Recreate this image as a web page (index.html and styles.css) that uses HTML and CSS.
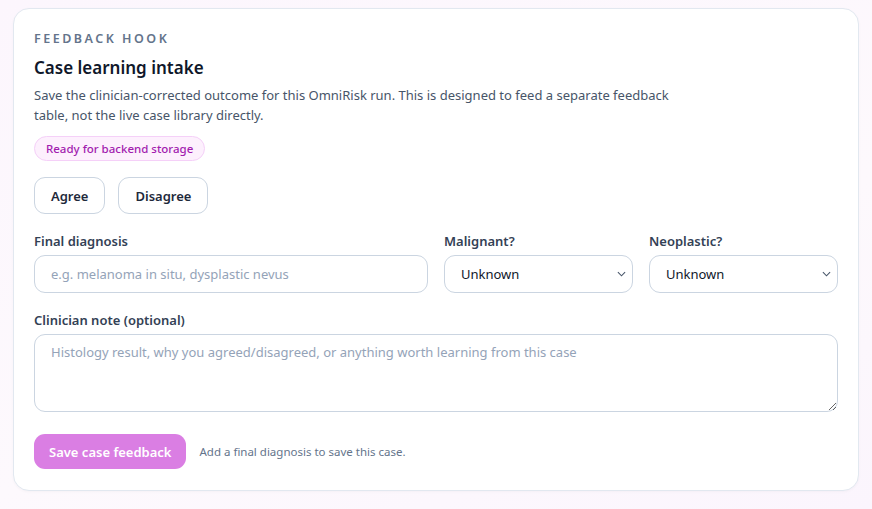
FILE: index.html
```html
<!DOCTYPE html>
<html lang="en">
<head>
<meta charset="utf-8">
<title>Feedback hook</title>
<link rel="stylesheet" href="styles.css">
</head>
<body>
<section class="card">
  <div class="eyebrow">FEEDBACK HOOK</div>
  <h2 class="title">Case learning intake</h2>
  <p class="desc">Save the clinician-corrected outcome for this OmniRisk run. This is designed to feed a separate feedback table, not the live case library directly.</p>
  <span class="badge">Ready for backend storage</span>
  <div class="choice-row">
    <button class="choice" type="button">Agree</button>
    <button class="choice" type="button">Disagree</button>
  </div>
  <div class="field-grid">
    <label class="field">
      <span class="label">Final diagnosis</span>
      <input class="control" type="text" placeholder="e.g. melanoma in situ, dysplastic nevus">
    </label>
    <label class="field">
      <span class="label">Malignant?</span>
      <div class="select-wrap">
        <select class="control select"><option>Unknown</option></select>
        <svg class="chev" viewBox="0 0 10 6" width="9" height="6"><path d="M1 1l4 4 4-4" fill="none" stroke="#475569" stroke-width="1.2"/></svg>
      </div>
    </label>
    <label class="field">
      <span class="label">Neoplastic?</span>
      <div class="select-wrap">
        <select class="control select"><option>Unknown</option></select>
        <svg class="chev" viewBox="0 0 10 6" width="9" height="6"><path d="M1 1l4 4 4-4" fill="none" stroke="#475569" stroke-width="1.2"/></svg>
      </div>
    </label>
  </div>
  <label class="field note-field">
    <span class="label">Clinician note (optional)</span>
    <textarea class="control area" placeholder="Histology result, why you agreed/disagreed, or anything worth learning from this case"></textarea>
  </label>
  <div class="actions">
    <button class="save" type="button">Save case feedback</button>
    <span class="hint">Add a final diagnosis to save this case.</span>
  </div>
</section>
</body>
</html>
```
FILE: styles.css
```css
* { box-sizing: border-box; }
html, body { margin: 0; height: 100%; }
body {
  background: linear-gradient(160deg, #fcf6fd 0%, #fdf9fd 60%, #fbf5fd 100%);
  font-family: "Noto Sans", "Open Sans", sans-serif;
  color: #0f172a;
  padding: 8px 13px 0 13px;
}
.card {
  width: 846px;
  height: 483px;
  background: #fff;
  border: 1px solid #e2e8f0;
  border-radius: 16px;
  padding: 20px 20px 20px 20px;
  display: flex;
  flex-direction: column;
  align-items: flex-start;
  box-shadow: 0 1px 3px rgba(15, 23, 42, 0.03);
}
.eyebrow {
  font-size: 12.5px;
  font-weight: 600;
  letter-spacing: 2.5px;
  color: #64748b;
  line-height: 20px;
}
.title {
  margin: 8px 0 0 0;
  font-size: 17px;
  font-weight: 600;
  line-height: 22px;
  color: #0f172a;
}
.desc {
  margin: 6px 0 0 0;
  font-size: 13px;
  line-height: 20px;
  color: #475569;
  max-width: 655px;
}
.badge {
  margin-top: 11px;
  display: inline-block;
  height: 25px;
  line-height: 23px;
  padding: 0 11px;
  font-size: 11.5px;
  font-weight: 500;
  color: #a21caf;
  background: #fdf0fd;
  border: 1px solid #f5d0f8;
  border-radius: 999px;
}
.choice-row {
  margin-top: 16px;
  display: flex;
  gap: 13px;
}
.choice {
  height: 37px;
  padding: 0 16px;
  font-family: inherit;
  font-size: 13px;
  font-weight: 600;
  color: #1e293b;
  background: #fff;
  border: 1px solid #cbd5e1;
  border-radius: 11px;
}
.field-grid {
  margin-top: 18px;
  width: 100%;
  display: grid;
  grid-template-columns: 1fr 189px 189px;
  gap: 16px;
}
.field {
  display: flex;
  flex-direction: column;
  gap: 5px;
}
.label {
  font-size: 13px;
  font-weight: 600;
  color: #334155;
  line-height: 18px;
}
.control {
  width: 100%;
  height: 38px;
  font-family: inherit;
  font-size: 13px;
  color: #0f172a;
  background: #fff;
  border: 1px solid #cbd5e1;
  border-radius: 11px;
  padding: 0 16px;
  outline: none;
}
.control::placeholder { color: #94a3b8; }
.select-wrap { position: relative; }
.select {
  appearance: none;
  -webkit-appearance: none;
  padding: 0 16px;
}
.chev {
  position: absolute;
  right: 7px;
  top: 16px;
  pointer-events: none;
}
.note-field {
  margin-top: 18px;
  width: 100%;
}
.area {
  height: 78px;
  padding: 8px 16px;
  resize: vertical;
  line-height: 18px;
}
.actions {
  margin-top: 22px;
  display: flex;
  align-items: center;
  gap: 13px;
}
.save {
  height: 35px;
  padding: 0 15px;
  font-family: inherit;
  font-size: 13px;
  font-weight: 600;
  color: #fff;
  background: #da7ee3;
  border: none;
  border-radius: 11px;
}
.hint {
  font-size: 11.5px;
  color: #64748b;
}
```
